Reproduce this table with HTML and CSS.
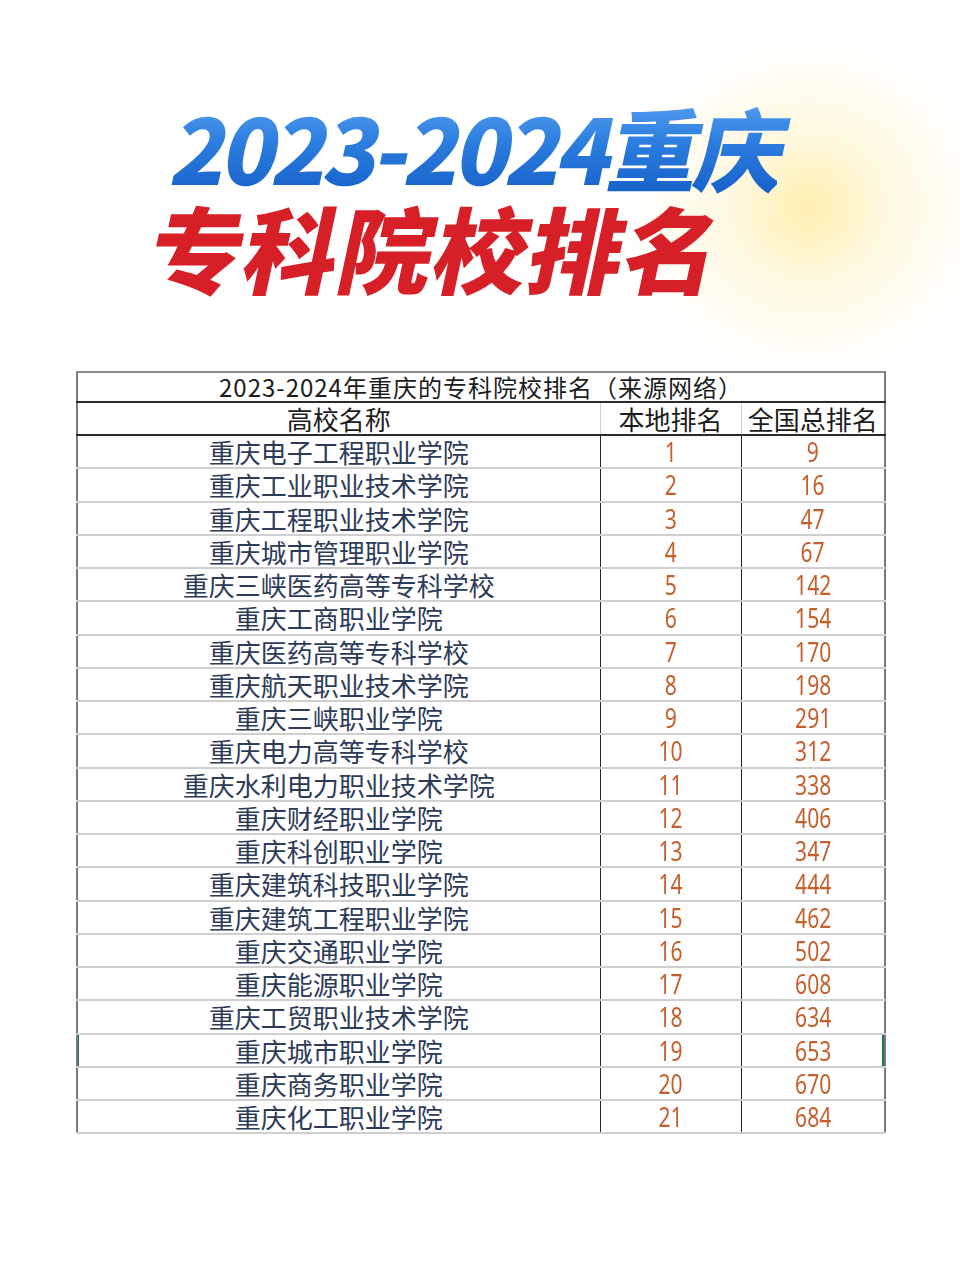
FILE: index.html
```html
<!DOCTYPE html>
<html lang="zh-CN">
<head>
<meta charset="utf-8">
<title>2023-2024重庆专科院校排名</title>
<link rel="stylesheet" href="styles.css">
</head>
<body>
<div class="page">
  <div class="glow"></div>
  <header class="hero">
    <div class="line1"><span class="skew">2023-2024重庆</span></div>
    <div class="line2"><span class="skew">专科院校排名</span></div>
  </header>
  <table class="rank">
    <colgroup><col class="c-name"><col class="c-local"><col class="c-nat"></colgroup>
    <tr class="title-row"><td colspan="3">2023-2024年重庆的专科院校排名（来源网络）</td></tr>
    <tr class="head-row"><td>高校名称</td><td>本地排名</td><td>全国总排名</td></tr>
    <tr><td class="name">重庆电子工程职业学院</td><td class="num"><span>1</span></td><td class="num"><span>9</span></td></tr>
    <tr><td class="name">重庆工业职业技术学院</td><td class="num"><span>2</span></td><td class="num"><span>16</span></td></tr>
    <tr><td class="name">重庆工程职业技术学院</td><td class="num"><span>3</span></td><td class="num"><span>47</span></td></tr>
    <tr><td class="name">重庆城市管理职业学院</td><td class="num"><span>4</span></td><td class="num"><span>67</span></td></tr>
    <tr><td class="name">重庆三峡医药高等专科学校</td><td class="num"><span>5</span></td><td class="num"><span>142</span></td></tr>
    <tr><td class="name">重庆工商职业学院</td><td class="num"><span>6</span></td><td class="num"><span>154</span></td></tr>
    <tr><td class="name">重庆医药高等专科学校</td><td class="num"><span>7</span></td><td class="num"><span>170</span></td></tr>
    <tr><td class="name">重庆航天职业技术学院</td><td class="num"><span>8</span></td><td class="num"><span>198</span></td></tr>
    <tr><td class="name">重庆三峡职业学院</td><td class="num"><span>9</span></td><td class="num"><span>291</span></td></tr>
    <tr><td class="name">重庆电力高等专科学校</td><td class="num"><span>10</span></td><td class="num"><span>312</span></td></tr>
    <tr><td class="name">重庆水利电力职业技术学院</td><td class="num"><span>11</span></td><td class="num"><span>338</span></td></tr>
    <tr><td class="name">重庆财经职业学院</td><td class="num"><span>12</span></td><td class="num"><span>406</span></td></tr>
    <tr><td class="name">重庆科创职业学院</td><td class="num"><span>13</span></td><td class="num"><span>347</span></td></tr>
    <tr><td class="name">重庆建筑科技职业学院</td><td class="num"><span>14</span></td><td class="num"><span>444</span></td></tr>
    <tr><td class="name">重庆建筑工程职业学院</td><td class="num"><span>15</span></td><td class="num"><span>462</span></td></tr>
    <tr><td class="name">重庆交通职业学院</td><td class="num"><span>16</span></td><td class="num"><span>502</span></td></tr>
    <tr><td class="name">重庆能源职业学院</td><td class="num"><span>17</span></td><td class="num"><span>608</span></td></tr>
    <tr><td class="name">重庆工贸职业技术学院</td><td class="num"><span>18</span></td><td class="num"><span>634</span></td></tr>
    <tr class="selected"><td class="name">重庆城市职业学院</td><td class="num"><span>19</span></td><td class="num"><span>653</span></td></tr>
    <tr><td class="name">重庆商务职业学院</td><td class="num"><span>20</span></td><td class="num"><span>670</span></td></tr>
    <tr><td class="name">重庆化工职业学院</td><td class="num"><span>21</span></td><td class="num"><span>684</span></td></tr>
  </table>
</div>
</body>
</html>
```

FILE: styles.css
```css
html, body {
  margin: 0;
  padding: 0;
  background: #ffffff;
}
.page {
  position: relative;
  width: 960px;
  height: 1280px;
  overflow: hidden;
  font-family: "Noto Sans CJK SC", "Noto Sans", sans-serif;
}
.glow {
  position: absolute;
  left: 560px;
  top: 20px;
  width: 400px;
  height: 340px;
  background: radial-gradient(ellipse 45% 50% at 62% 55%, rgba(255, 228, 110, 0.55) 0%, rgba(255, 238, 170, 0.35) 45%, rgba(255, 255, 255, 0) 100%);
  z-index: 0;
}
.hero {
  position: relative;
  z-index: 1;
  height: 371px;
  padding-top: 96px;
  box-sizing: border-box;
}
.skew {
  display: inline-block;
  transform: skewX(-12deg);
  font-weight: 900;
  white-space: nowrap;
}
.line1 {
  margin-left: 176px;
  height: 100px;
}
.line1 .skew {
  font-size: 90px;
  line-height: 100px;
  letter-spacing: -4px;
  background: linear-gradient(180deg, #5aa2f0 0%, #2c7ee0 45%, #1660c8 100%);
  -webkit-background-clip: text;
  background-clip: text;
  color: transparent;
}
.line2 {
  margin-left: 152px;
  height: 100px;
}
.line2 .skew {
  font-size: 94px;
  line-height: 100px;
  letter-spacing: 1px;
  color: #d61f26;
}
.rank {
  position: relative;
  z-index: 1;
  margin-left: 76px;
  width: 808px;
  border-collapse: collapse;
  table-layout: fixed;
  border: 2px solid #7a7a7a;
  border-top-color: #8a8a8a;
}
.c-name { width: 523px; }
.c-local { width: 141px; }
.c-nat { width: 144px; }
.rank td {
  padding: 0;
  text-align: center;
  white-space: nowrap;
}
.title-row td {
  height: 28px;
  font-size: 24px;
  line-height: 28px;
  letter-spacing: 1px;
  color: #1c1c1c;
  border-bottom: 2px solid #2a2a2a;
}
.head-row td {
  height: 31px;
  font-size: 26px;
  line-height: 31px;
  color: #1c1c1c;
  border-bottom: 2px solid #2a2a2a;
  border-left: 1px solid #d0d0d0;
}
.head-row td:first-child { border-left: none; }
.rank tr:not(.title-row):not(.head-row) td {
  height: 31.25px;
  line-height: 31px;
  border-bottom: 2px solid #cfcfcf;
  border-left: 1.5px solid #2a2a2a;
}
.rank tr:not(.title-row):not(.head-row) td:first-child { border-left: none; }
.rank tr:last-child td { border-bottom: 2px solid #4a4a4a; }
.name {
  font-size: 26px;
  color: #2c3b58;
}
.num {
  font-size: 27px;
  color: #c5602c;
  font-family: "Noto Sans", "Open Sans", sans-serif;
  font-weight: 400;
}
.num span {
  display: inline-block;
  transform: scaleX(0.78);
}
.selected td:last-child {
  box-shadow: inset -2px 0 0 #1f7a4a;
}
.selected td:first-child {
  box-shadow: inset 1px 0 0 #1f7a4a;
}
```
